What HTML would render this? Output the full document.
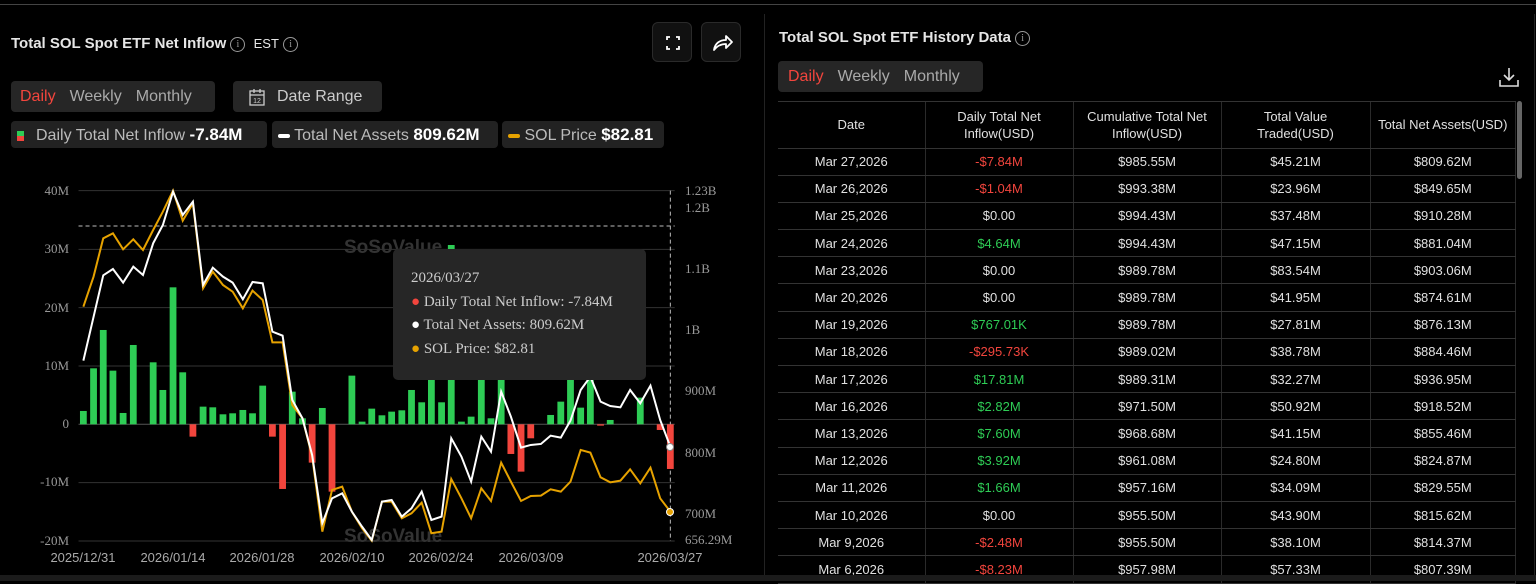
<!DOCTYPE html>
<html><head><meta charset="utf-8"><style>
*{box-sizing:border-box;margin:0;padding:0}
body{width:1536px;height:581px;background:#000;font-family:"Liberation Sans",sans-serif;color:#ddd;position:relative;overflow:hidden}
.abs{position:absolute}
.topline{left:0;top:4px;width:1536px;height:1px;background:#444}
.bottom{left:0;top:575px;width:1536px;height:6px;background:#1b1b1b}
.divider{left:764px;top:14px;width:1px;height:561px;background:#222}
.title{font-size:15px;font-weight:bold;color:#e6e6e6}
.info{display:inline-block;width:15px;height:15px;border:1px solid #999;border-radius:50%;font-size:10px;color:#999;text-align:center;line-height:13px;vertical-align:middle;font-family:"Liberation Serif",serif;font-weight:normal}
.seg{background:#262626;border-radius:4px;font-size:16px;color:#aaa}
.seg span{margin-right:14px}
.red{color:#f2453d}.grn{color:#2ecc55}
.btn{background:#111;border:1px solid #2a2a2a;border-radius:6px;width:40px;height:40px}
.leg{background:#222;border-radius:4px;height:27px;font-size:16px;color:#bbb;line-height:27px;padding:0 6px}
.leg b{color:#fff;font-size:17px}
table{border-collapse:collapse;font-size:13px;color:#e0e0e0}
td{border-right:1px solid #2a2a2a;border-bottom:1px solid #333;text-align:center;height:27.2px;padding:0}
th{font-weight:normal;border-right:1px solid #2a2a2a;border-bottom:1px solid #333;text-align:center;height:46px;line-height:17px;font-size:13px;color:#e0e0e0}
</style></head><body>
<div class="abs topline"></div>
<div class="abs divider"></div>
<div class="abs title" style="left:11px;top:35px">Total SOL Spot ETF Net Inflow <span class="info">i</span> <span style="font-weight:normal;font-size:13px;margin-left:4px">EST</span> <span class="info">i</span></div>
<div class="abs btn" style="left:652px;top:22px"><svg width="40" height="40"><path d="M14 17v-3h3M23 14h3v3M26 23v3h-3M17 26h-3v-3" stroke="#fff" stroke-width="1.8" fill="none"/></svg></div>
<div class="abs btn" style="left:701px;top:22px"><svg width="40" height="40"><path d="M12 27c1-7 6-10 12-10v-4l6 6-6 6v-4c-5 0-9 2-12 6z" stroke="#fff" stroke-width="1.8" fill="none" stroke-linejoin="round"/></svg></div>
<div class="abs seg" style="left:11px;top:81px;width:204px;height:31px;line-height:31px;padding-left:9px"><span class="red">Daily</span><span>Weekly</span><span>Monthly</span></div>
<div class="abs seg" style="left:233px;top:81px;width:149px;height:31px;line-height:31px;padding-left:44px;color:#ccc"><svg class="abs" style="left:15px;top:7px" width="18" height="18"><rect x="2" y="3" width="14" height="14" stroke="#ccc" fill="none" stroke-width="1.3"/><path d="M2 7h14M6 1v4M12 1v4" stroke="#ccc" stroke-width="1.3"/><text x="9" y="15" font-size="7" fill="#ccc" text-anchor="middle">12</text></svg>Date Range</div>
<div class="abs leg" style="left:11px;top:121px;width:256px"><span style="display:inline-block;width:7px;height:10px;background:linear-gradient(#2ecc55 50%,#f2453d 50%);margin-right:12px;vertical-align:middle"></span>Daily Total Net Inflow <b>-7.84M</b></div>
<div class="abs leg" style="left:272px;top:121px;width:226px"><span style="display:inline-block;width:12px;height:4px;background:#fff;border-radius:2px;vertical-align:middle"></span> Total Net Assets <b>809.62M</b></div>
<div class="abs leg" style="left:502px;top:121px;width:162px"><span style="display:inline-block;width:12px;height:4px;background:#e6a200;border-radius:2px;vertical-align:middle"></span> SOL Price <b>$82.81</b></div>

<svg class="abs" style="left:0;top:170px" width="760" height="405">
<g fill="#333" font-weight="bold"><text x="344" y="83" font-size="19">SoSoValue</text><text x="344" y="372" font-size="19">SoSoValue</text></g>
<g transform="scale(0.4847,0.3333)">
<g stroke="#333" stroke-width="1">
<path d="M162 62H1392M162 238H1392M162 413H1392M162 588H1392M162 938H1392M162 1113H1392" vector-effect="non-scaling-stroke"/>
<path d="M162 763H1392" stroke="#555" vector-effect="non-scaling-stroke"/>
</g>
<path d="M162 168H1392" stroke="#bbb" stroke-dasharray="4 3" vector-effect="non-scaling-stroke"/>
<path d="M1383 62V1113" stroke="#bbb" stroke-dasharray="4 3" vector-effect="non-scaling-stroke"/>
<g fill="#2ecc55">
<rect x="165" y="723" width="14" height="40"/><rect x="186" y="595" width="14" height="168"/><rect x="206" y="480" width="14" height="283"/><rect x="226" y="602" width="14" height="161"/><rect x="247" y="729" width="14" height="34"/><rect x="268" y="525" width="14" height="238"/><rect x="309" y="577" width="14" height="186"/><rect x="329" y="660" width="14" height="103"/><rect x="350" y="352" width="14" height="411"/><rect x="370" y="607" width="14" height="156"/><rect x="412" y="710" width="14" height="53"/><rect x="432" y="712" width="14" height="51"/><rect x="453" y="733" width="14" height="30"/><rect x="473" y="730" width="14" height="33"/><rect x="494" y="720" width="14" height="43"/><rect x="514" y="730" width="14" height="33"/><rect x="535" y="647" width="14" height="116"/><rect x="596" y="665" width="14" height="98"/><rect x="617" y="745" width="14" height="18"/><rect x="658" y="714" width="14" height="49"/><rect x="719" y="617" width="14" height="146"/><rect x="740" y="755" width="14" height="8"/><rect x="760" y="716" width="14" height="47"/><rect x="781" y="736" width="14" height="27"/><rect x="801" y="725" width="14" height="38"/><rect x="822" y="721" width="14" height="42"/><rect x="842" y="660" width="14" height="103"/><rect x="863" y="697" width="14" height="66"/><rect x="883" y="630" width="14" height="133"/><rect x="904" y="697" width="14" height="66"/><rect x="924" y="225" width="14" height="538"/><rect x="945" y="755" width="14" height="8"/><rect x="965" y="740" width="14" height="23"/><rect x="986" y="630" width="14" height="133"/><rect x="1006" y="745" width="14" height="18"/><rect x="1027" y="630" width="14" height="133"/><rect x="1129" y="735" width="14" height="28"/><rect x="1150" y="695" width="14" height="68"/><rect x="1170" y="630" width="14" height="133"/><rect x="1191" y="713" width="14" height="50"/><rect x="1211" y="620" width="14" height="143"/><rect x="1252" y="750" width="14" height="13"/><rect x="1314" y="683" width="14" height="80"/>
</g>
<g fill="#f2453d">
<rect x="391" y="763" width="14" height="37"/><rect x="555" y="763" width="14" height="37"/><rect x="576" y="763" width="14" height="194"/><rect x="637" y="763" width="14" height="115"/><rect x="678" y="763" width="14" height="202"/><rect x="1047" y="763" width="14" height="89"/><rect x="1068" y="763" width="14" height="142"/><rect x="1088" y="763" width="14" height="42"/><rect x="1232" y="763" width="14" height="4"/><rect x="1355" y="763" width="14" height="17"/><rect x="1376" y="763" width="14" height="134"/>
</g>
<polyline fill="none" stroke="#e6a200" stroke-width="2" vector-effect="non-scaling-stroke" points="172,410 193,320 213,205 233,190 254,238 275,208 295,240 316,180 336,125 357,62 377,152 398,100 419,355 439,305 460,345 480,365 501,415 521,362 542,390 562,517 583,517 603,705 624,745 644,860 665,1085 685,960 706,950 726,1025 747,1075 767,1112 788,995 808,995 829,1045 849,1030 870,998 890,1090 911,1085 931,927 952,985 972,1045 993,955 1013,993 1034,878 1054,935 1075,993 1095,978 1116,977 1136,958 1157,965 1177,935 1198,840 1218,848 1239,922 1259,937 1280,932 1300,898 1321,940 1342,893 1362,985 1383,1025"/>
<polyline fill="none" stroke="#fff" stroke-width="2" vector-effect="non-scaling-stroke" points="172,572 213,316 233,297 254,338 275,290 295,315 316,220 336,165 357,65 377,135 398,95 419,345 439,293 460,320 480,338 501,388 521,336 542,340 562,485 583,497 603,690 624,745 644,855 665,1060 685,985 706,970 726,1025 747,1070 767,1110 788,995 808,990 829,1040 849,1015 870,965 890,1050 911,1040 931,805 952,860 972,935 993,800 1013,845 1034,665 1054,740 1075,833 1095,825 1116,822 1136,797 1157,803 1177,752 1198,660 1218,620 1239,695 1259,708 1280,712 1300,660 1321,700 1342,647 1362,750 1383,830"/>
</g>
<circle cx="670" cy="277" r="3.5" fill="#fff" stroke="#888"/>
<circle cx="670" cy="342" r="3.5" fill="#e6a200" stroke="#fff"/>
<g font-family="Liberation Serif,serif" font-size="13" fill="#999" text-anchor="end">
<text x="69" y="25">40M</text><text x="69" y="83">30M</text><text x="69" y="142">20M</text><text x="69" y="200">10M</text><text x="69" y="258">0</text><text x="69" y="316">-10M</text><text x="69" y="375">-20M</text>
</g>
<g font-family="Liberation Serif,serif" font-size="13" fill="#999">
<text x="685" y="25">1.23B</text><text x="685" y="42">1.2B</text><text x="685" y="103">1.1B</text><text x="685" y="164">1B</text><text x="685" y="225">900M</text><text x="685" y="287">800M</text><text x="685" y="348">700M</text><text x="685" y="374">656.29M</text>
</g>
<g font-size="13" fill="#aaa" text-anchor="middle">
<text x="83" y="392">2025/12/31</text><text x="173" y="392">2026/01/14</text><text x="262" y="392">2026/01/28</text><text x="352" y="392">2026/02/10</text><text x="441" y="392">2026/02/24</text><text x="531" y="392">2026/03/09</text><text x="670" y="392">2026/03/27</text>
</g>
</svg>
<div class="abs" style="left:393px;top:249px;width:253px;height:131px;background:#262626;border-radius:5px;font-family:'Liberation Serif',serif;font-size:15px;color:#ccc;padding:18px 0 0 18px;line-height:23.5px">
<div>2026/03/27</div>
<div><span style="color:#f2453d">●</span> Daily Total Net Inflow: -7.84M</div>
<div><span style="color:#fff">●</span> Total Net Assets: 809.62M</div>
<div><span style="color:#e6a200">●</span> SOL Price: $82.81</div>
</div>

<div class="abs title" style="left:779px;top:29px">Total SOL Spot ETF History Data <span class="info">i</span></div>
<div class="abs seg" style="left:778px;top:61px;width:205px;height:31px;line-height:31px;padding-left:10px"><span class="red">Daily</span><span>Weekly</span><span>Monthly</span></div>
<svg class="abs" style="left:1498px;top:66px" width="22" height="22"><path d="M11 2v12M6 9l5 5 5-5M2 14v6h18v-6" stroke="#ddd" stroke-width="1.6" fill="none"/></svg>
<div class="abs" style="left:778px;top:101px;width:738px;border-top:1px solid #333">
<table style="width:738px">
<tr><th style="width:147px">Date</th><th style="width:148px">Daily Total Net<br>Inflow(USD)</th><th style="width:148px">Cumulative Total Net<br>Inflow(USD)</th><th style="width:149px">Total Value<br>Traded(USD)</th><th>Total Net Assets(USD)</th></tr>
<tr><td>Mar 27,2026</td><td class="red">-$7.84M</td><td>$985.55M</td><td>$45.21M</td><td>$809.62M</td></tr>
<tr><td>Mar 26,2026</td><td class="red">-$1.04M</td><td>$993.38M</td><td>$23.96M</td><td>$849.65M</td></tr>
<tr><td>Mar 25,2026</td><td>$0.00</td><td>$994.43M</td><td>$37.48M</td><td>$910.28M</td></tr>
<tr><td>Mar 24,2026</td><td class="grn">$4.64M</td><td>$994.43M</td><td>$47.15M</td><td>$881.04M</td></tr>
<tr><td>Mar 23,2026</td><td>$0.00</td><td>$989.78M</td><td>$83.54M</td><td>$903.06M</td></tr>
<tr><td>Mar 20,2026</td><td>$0.00</td><td>$989.78M</td><td>$41.95M</td><td>$874.61M</td></tr>
<tr><td>Mar 19,2026</td><td class="grn">$767.01K</td><td>$989.78M</td><td>$27.81M</td><td>$876.13M</td></tr>
<tr><td>Mar 18,2026</td><td class="red">-$295.73K</td><td>$989.02M</td><td>$38.78M</td><td>$884.46M</td></tr>
<tr><td>Mar 17,2026</td><td class="grn">$17.81M</td><td>$989.31M</td><td>$32.27M</td><td>$936.95M</td></tr>
<tr><td>Mar 16,2026</td><td class="grn">$2.82M</td><td>$971.50M</td><td>$50.92M</td><td>$918.52M</td></tr>
<tr><td>Mar 13,2026</td><td class="grn">$7.60M</td><td>$968.68M</td><td>$41.15M</td><td>$855.46M</td></tr>
<tr><td>Mar 12,2026</td><td class="grn">$3.92M</td><td>$961.08M</td><td>$24.80M</td><td>$824.87M</td></tr>
<tr><td>Mar 11,2026</td><td class="grn">$1.66M</td><td>$957.16M</td><td>$34.09M</td><td>$829.55M</td></tr>
<tr><td>Mar 10,2026</td><td>$0.00</td><td>$955.50M</td><td>$43.90M</td><td>$815.62M</td></tr>
<tr><td>Mar 9,2026</td><td class="red">-$2.48M</td><td>$955.50M</td><td>$38.10M</td><td>$814.37M</td></tr>
<tr><td>Mar 6,2026</td><td class="red">-$8.23M</td><td>$957.98M</td><td>$57.33M</td><td>$807.39M</td></tr>
</table></div>
<div class="abs" style="left:1517px;top:101px;width:5px;height:78px;background:#666;border-radius:3px"></div>
<div class="abs" style="left:1534px;top:14px;width:1px;height:561px;background:#222"></div>
<div class="abs bottom"></div>
</body></html>
